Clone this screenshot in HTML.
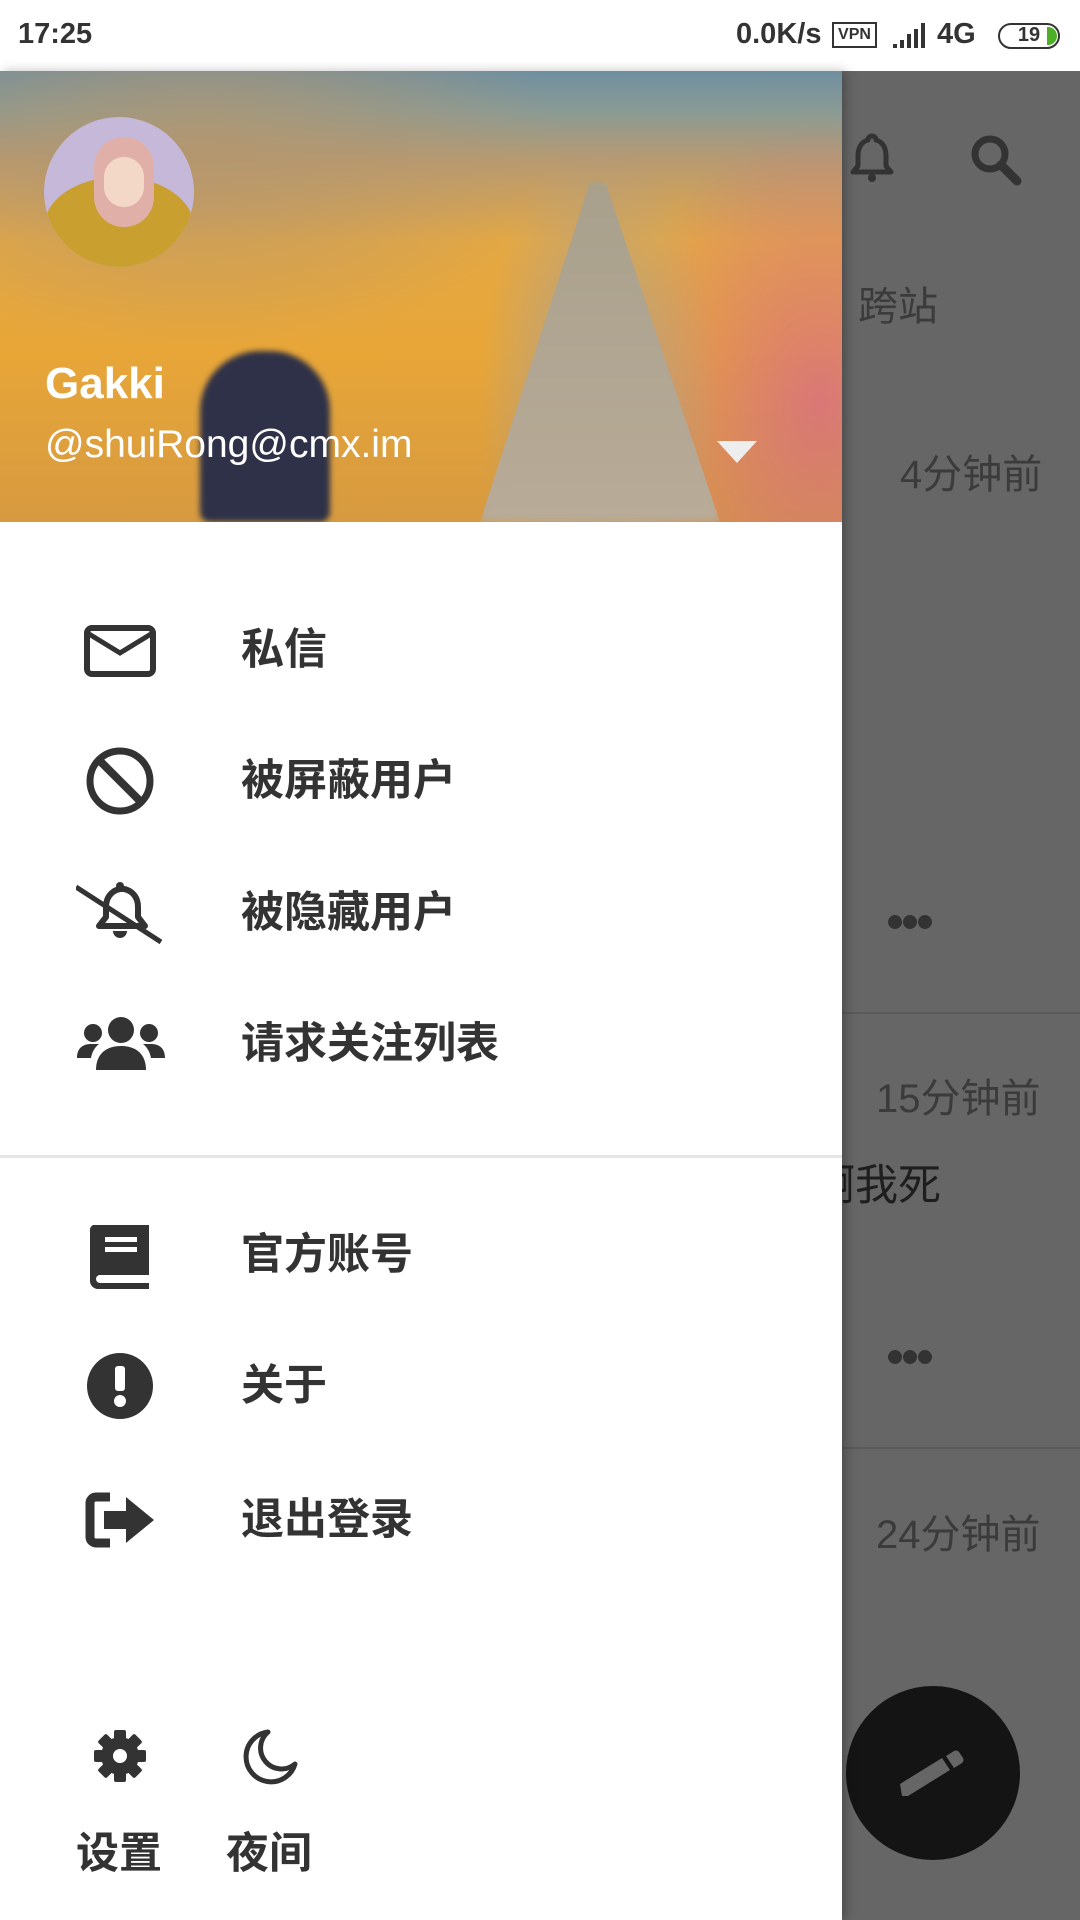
<!DOCTYPE html>
<html><head><meta charset="utf-8"><style>
*{margin:0;padding:0;box-sizing:border-box}
body{width:1080px;height:1920px;position:relative;overflow:hidden;background:#666;font-family:"Liberation Sans","Noto Sans CJK SC",sans-serif}
.abs{position:absolute}
.status{left:0;top:0;width:1080px;height:71px;background:#fff;color:#333;font-weight:bold;font-size:29px}
.over{color:#3b3b3b;font-size:40px;white-space:nowrap}
.drawer{left:0;top:71px;width:842px;height:1849px;background:#fff;box-shadow:4px 0 10px rgba(0,0,0,.25)}
.hdr{left:0;top:0;width:842px;height:451px;overflow:hidden;
background:
radial-gradient(ellipse 120px 260px at 600px 330px,rgba(170,160,150,.95),rgba(170,160,150,0) 100%),
radial-gradient(ellipse 200px 280px at 820px 330px,rgba(210,90,160,.6),rgba(210,90,160,0)),
radial-gradient(ellipse 360px 200px at 200px 80px,rgba(180,150,110,.8),rgba(180,150,110,0)),
linear-gradient(180deg,#6f8fa0 0,#8a9a95 40px,#b89a70 90px,#e4a843 170px,#e8a638 280px,#d69a40 451px);}
.hdr .road{left:480px;top:110px;width:240px;height:341px;background:linear-gradient(180deg,#a8a08c,#b8ab98);clip-path:polygon(46% 0,52% 0,100% 100%,0 100%);filter:blur(4px)}
.item{left:0;width:842px;height:80px}
.item svg{position:absolute;left:84px;top:4px}
.item span{position:absolute;left:241px;top:0;line-height:80px;font-size:43px;color:#333;font-weight:bold}
</style></head><body>
<div class="abs status">
<div class="abs" style="left:18px;top:18px">17:25</div>
<div class="abs" style="left:736px;top:18px">0.0K/s</div>
<div class="abs" style="left:832px;top:22px;width:45px;height:26px;border:2px solid #333;font-size:16px;line-height:22px;text-align:center">VPN</div>
<svg class="abs" style="left:891px;top:22px" width="40" height="28"><path d="M2 26h4v-4H2zM9 26h4v-8H9zM16 26h4V12h-4zM23 26h4V7h-4zM30 26h4V1h-4z" fill="#333"/></svg>
<div class="abs" style="left:937px;top:18px">4G</div>
<div class="abs" style="left:998px;top:23px;width:62px;height:26px;border:2.5px solid #333;border-radius:13px;font-size:20px;line-height:21px;text-align:center">19<span style="position:absolute;right:1px;top:2px;width:10px;height:18px;background:#4caf25;border-radius:0 9px 9px 0"></span></div>
</div>

<svg class="abs" style="left:850px;top:133px" width="44" height="50"><path d="M22 3a4 4 0 0 1 4 4c8 2 10 10 10 16v10l5 6H3l5-6V23c0-6 2-14 10-16a4 4 0 0 1 4-4z" fill="none" stroke="#333" stroke-width="5" stroke-linejoin="round"/><circle cx="22" cy="45" r="4" fill="#333"/></svg>
<svg class="abs" style="left:968px;top:132px" width="56" height="56"><circle cx="22" cy="22" r="15" fill="none" stroke="#333" stroke-width="7"/><path d="M33 33l16 16" stroke="#333" stroke-width="9" stroke-linecap="round"/></svg>
<div class="abs over" style="left:858px;top:274px">跨站</div>
<div class="abs over" style="left:900px;top:442px">4分钟前</div>
<div class="abs" style="left:888px;top:915px;width:44px;height:14px;background:radial-gradient(circle 7px at 7px 7px,#333 98%,transparent),radial-gradient(circle 7px at 22px 7px,#333 98%,transparent),radial-gradient(circle 7px at 37px 7px,#333 98%,transparent)"></div>
<div class="abs" style="left:842px;top:1012px;width:238px;height:2px;background:#5a5a5a"></div>
<div class="abs over" style="left:876px;top:1066px">15分钟前</div>
<div class="abs over" style="left:812px;top:1151px;color:#1e1e1e;font-size:43px">啊我死</div>
<div class="abs" style="left:888px;top:1350px;width:44px;height:14px;background:radial-gradient(circle 7px at 7px 7px,#333 98%,transparent),radial-gradient(circle 7px at 22px 7px,#333 98%,transparent),radial-gradient(circle 7px at 37px 7px,#333 98%,transparent)"></div>
<div class="abs" style="left:842px;top:1447px;width:238px;height:2px;background:#5a5a5a"></div>
<div class="abs over" style="left:876px;top:1502px">24分钟前</div>
<div class="abs" style="left:846px;top:1686px;width:174px;height:174px;border-radius:50%;background:#141414"></div>
<svg class="abs" style="left:898px;top:1736px" width="70" height="70"><path d="M2 48L44 22l8 12-42 26H4z" fill="#666"/><path d="M48 20l8-5a4 4 0 0 1 5 1l4 6a4 4 0 0 1-1 5l-8 5z" fill="#666"/></svg>

<div class="abs drawer">
<div class="abs hdr">
<div class="abs road"></div>
<div class="abs" style="left:200px;top:280px;width:130px;height:171px;background:#2e3148;border-radius:60px 60px 10px 10px;filter:blur(3px)"></div>
<div class="abs" style="left:44px;top:46px;width:150px;height:150px;border-radius:50%;overflow:hidden;background:#c5b8d8">
<div class="abs" style="left:0;top:60px;width:150px;height:100px;background:#c9a030;border-radius:50% 50% 0 0"></div>
<div class="abs" style="left:50px;top:20px;width:60px;height:90px;background:#e0b0a8;border-radius:30px"></div>
<div class="abs" style="left:60px;top:40px;width:40px;height:50px;background:#f3d8c8;border-radius:20px"></div>
</div>
<div class="abs" style="left:45px;top:288px;color:#fff;font-weight:bold;font-size:44px">Gakki</div>
<div class="abs" style="left:45px;top:352px;color:#fff;font-size:39px">@shuiRong@cmx.im</div>
<div class="abs" style="left:717px;top:370px;width:0;height:0;border-left:20px solid transparent;border-right:20px solid transparent;border-top:22px solid #eee"></div>
</div>

<div class="abs item" style="top:539px"><svg width="72" height="72" viewBox="0 0 72 72"><rect x="3" y="14" width="66" height="46" rx="5" fill="none" stroke="#333" stroke-width="6"/><path d="M5 20l31 19 31-19" fill="none" stroke="#333" stroke-width="5"/></svg><span>私信</span></div>
<div class="abs item" style="top:670px"><svg width="72" height="72" viewBox="0 0 72 72"><circle cx="36" cy="36" r="30" fill="none" stroke="#333" stroke-width="7"/><path d="M15 15l42 42" stroke="#333" stroke-width="8"/></svg><span>被屏蔽用户</span></div>
<div class="abs item" style="top:802px"><svg width="90" height="72" viewBox="0 0 90 72" style="left:76px"><path d="M44 12c-10 2-14 10-14 18v10l-7 9h46l-7-9V30c0-8-4-16-14-18z" fill="none" stroke="#333" stroke-width="6" stroke-linejoin="round"/><circle cx="44" cy="9" r="4" fill="#333"/><path d="M37 54a7 7 0 0 0 14 0z" fill="#333"/><path d="M0 10l85 55" stroke="#333" stroke-width="5"/></svg><span>被隐藏用户</span></div>
<div class="abs item" style="top:933px"><svg width="90" height="72" viewBox="0 0 90 72" style="left:76px"><circle cx="45" cy="22" r="13" fill="#333"/><circle cx="17" cy="25" r="9" fill="#333"/><circle cx="73" cy="25" r="9" fill="#333"/><path d="M20 62c0-16 10-24 25-24s25 8 25 24z" fill="#333"/><path d="M1 50c0-10 6-14 14-14h8c-5 4-7 9-8 14z" fill="#333"/><path d="M89 50c0-10-6-14-14-14h-8c5 4 7 9 8 14z" fill="#333"/></svg><span>请求关注列表</span></div>

<div class="abs" style="left:0;top:1084px;width:842px;height:3px;background:#e6e6e6"></div>

<div class="abs item" style="top:1144px"><svg width="72" height="72" viewBox="0 0 72 72"><path d="M9 6h56v50H16a4 4 0 0 0 0 8h49v6H14a8 8 0 0 1-8-8V12a6 6 0 0 1 3-6z" fill="#333"/><rect x="21" y="18" width="32" height="5" fill="#fff"/><rect x="21" y="28" width="32" height="5" fill="#fff"/></svg><span>官方账号</span></div>
<div class="abs item" style="top:1275px"><svg width="72" height="72" viewBox="0 0 72 72"><circle cx="36" cy="36" r="33" fill="#333"/><rect x="31" y="16" width="10" height="25" rx="3" fill="#fff"/><circle cx="36" cy="51" r="6" fill="#fff"/></svg><span>关于</span></div>
<div class="abs item" style="top:1409px"><svg width="80" height="72" viewBox="0 0 80 72"><path d="M26 13H12a6 6 0 0 0-6 6v34a6 6 0 0 0 6 6h14" fill="none" stroke="#333" stroke-width="9"/><path d="M20 27h22V13l28 23-28 23V45H20z" fill="#333"/></svg><span>退出登录</span></div>

<svg class="abs" style="left:93px;top:1658px" width="54" height="54" viewBox="0 0 54 54"><g fill="#333" transform="translate(27 27)"><circle r="19"/><rect x="-6" y="-26" width="12" height="52" rx="2"/><rect x="-6" y="-26" width="12" height="52" rx="2" transform="rotate(45)"/><rect x="-6" y="-26" width="12" height="52" rx="2" transform="rotate(90)"/><rect x="-6" y="-26" width="12" height="52" rx="2" transform="rotate(135)"/></g><circle cx="27" cy="27" r="7" fill="#fff"/></svg>
<svg class="abs" style="left:242px;top:1658px" width="56" height="56" viewBox="0 0 56 56"><path d="M26 3a25 25 0 1 0 27 32 20 20 0 0 1-27-32z" fill="none" stroke="#333" stroke-width="5" stroke-linejoin="round"/></svg>
<div class="abs" style="left:76px;top:1748px;font-size:43px;color:#333;font-weight:bold">设置</div>
<div class="abs" style="left:226px;top:1748px;font-size:43px;color:#333;font-weight:bold">夜间</div>
</div>
</body></html>
